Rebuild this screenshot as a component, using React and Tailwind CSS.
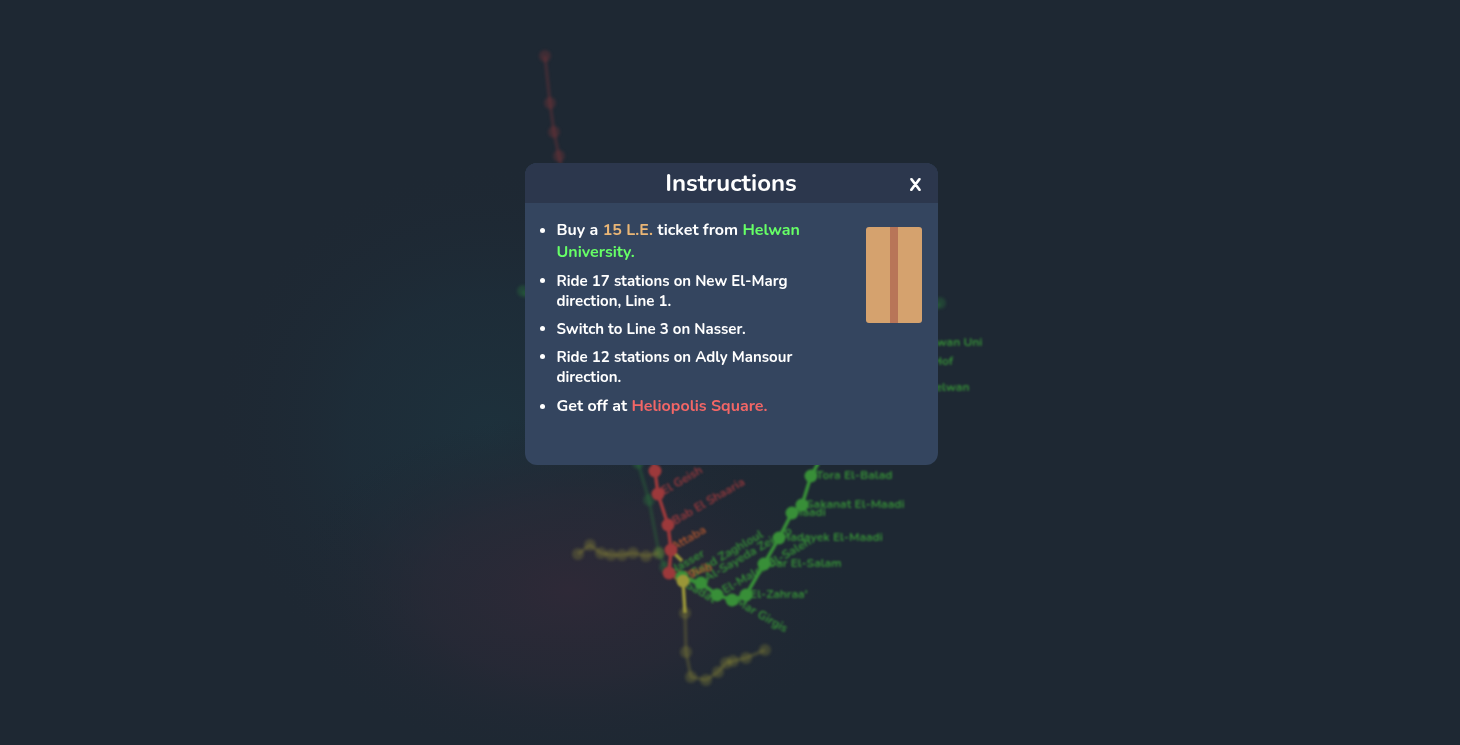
const FONT = "font-[Nunito,Lato,sans-serif]";

const GREEN = "#388f38";
const RED = "#9c393b";
const YELLOW = "#9a9638";

const activeLines = [
  { color: GREEN, points: [[682, 577], [701, 583], [717, 595], [732, 600], [746, 595], [764, 564], [779, 538], [792, 513], [802, 505], [811, 476], [840, 425]], dots: 10 },
  { color: YELLOW, points: [[671, 550], [682, 561]], dots: 0 },
  { color: YELLOW, points: [[683, 581], [685, 613]], dots: 1 },
  { color: RED, points: [[650, 440], [655, 471], [658, 494], [668, 525], [671, 550], [669, 573]], dots: 6 },
];

const fadedLines = [
  { color: RED, points: [[545, 56], [550, 103], [554, 132], [559, 156], [566, 190]] },
  { color: "#2f8a3c", points: [[523, 291], [600, 400], [638, 463], [649, 500], [659, 553], [665, 567]] },
  { color: "#2f8a3c", points: [[920, 330], [940, 303]] },
  { color: YELLOW, points: [[578, 554], [590, 545], [601, 553], [611, 555], [622, 555], [633, 553], [646, 556], [659, 553]] },
  { color: YELLOW, points: [[685, 613], [686, 652], [691, 677], [706, 680], [718, 672], [726, 663], [733, 661], [746, 658], [765, 650]] },
];

const labels = [
  { text: "Helwan Uni", x: 917, y: 346 },
  { text: "Ain Helwan", x: 904, y: 391 },
  { text: "Wadi Hof", x: 900, y: 365 },
  { text: "Tora El-Balad", x: 816, y: 479 },
  { text: "Sakanat El-Maadi", x: 806, y: 508 },
  { text: "Maadi", x: 792, y: 516 },
  { text: "Hadayek El-Maadi", x: 781, y: 541 },
  { text: "Dar El-Salam", x: 767, y: 567 },
  { text: "El-Zahraa'", x: 750, y: 598 },
  { text: "Mar Girgis", x: 735, y: 604, rotate: 30 },
  { text: "El-Malek El-Saleh", x: 725, y: 594, rotate: -30 },
  { text: "Al-Sayeda Zeinab", x: 707, y: 582, rotate: -30 },
  { text: "Saad Zaghloul", x: 694, y: 577, rotate: -30 },
  { text: "Nasser", x: 672, y: 575, rotate: -30 },
  { text: "Sadat", x: 685, y: 587, rotate: 30 },
  { text: "Naguib", x: 674, y: 580, rotate: -14, color: "#b0622f" },
  { text: "Attaba", x: 674, y: 551, rotate: -30, color: "#a8532f" },
  { text: "Bab El Shaaria", x: 675, y: 525, rotate: -30, color: "#92383c" },
  { text: "El Geish", x: 664, y: 495, rotate: -30, color: "#92383c" },
];

const toPath = (points) => points.map((p) => p.join(",")).join(" ");

function MetroMap() {
  return (
    <svg
      className="absolute inset-0 h-full w-full"
      viewBox="0 0 1460 745"
      preserveAspectRatio="xMidYMid slice"
      aria-hidden="true"
    >
      <defs>
        <radialGradient id="teal">
          <stop offset="0" stopColor="#1d333e" stopOpacity="0.8" />
          <stop offset="0.5" stopColor="#1d2f3b" stopOpacity="0.6" />
          <stop offset="1" stopColor="#1e2833" stopOpacity="0" />
        </radialGradient>
        <radialGradient id="plum">
          <stop offset="0" stopColor="#2e2937" stopOpacity="1" />
          <stop offset="0.5" stopColor="#292936" stopOpacity="0.7" />
          <stop offset="1" stopColor="#1e2833" stopOpacity="0" />
        </radialGradient>
        <filter id="soft" x="-5%" y="-5%" width="110%" height="110%" colorInterpolationFilters="sRGB">
          <feGaussianBlur stdDeviation="0.8" />
        </filter>
        <filter id="softer" x="-5%" y="-5%" width="110%" height="110%" colorInterpolationFilters="sRGB">
          <feGaussianBlur stdDeviation="1.4" />
        </filter>
      </defs>
      <ellipse cx="490" cy="430" rx="285" ry="270" fill="url(#teal)" />
      <ellipse cx="570" cy="590" rx="290" ry="175" fill="url(#plum)" />
      <g filter="url(#softer)">
        {fadedLines.map(({ color, points }, i) => (
          <g key={i}>
            <polyline points={toPath(points)} fill="none" stroke={color} strokeWidth="3" opacity="0.3" />
            {points.map(([x, y]) => (
              <circle key={x} cx={x} cy={y} r="6" fill={color} opacity="0.26" />
            ))}
          </g>
        ))}
      </g>
      <g filter="url(#soft)">
        {labels.map(({ text, x, y, rotate = 0, color = "#358b37" }) => (
          <text
            key={text}
            x={x}
            y={y}
            fill={color}
            transform={`rotate(${rotate} ${x} ${y})`}
            className="text-[12px] font-bold"
          >
            {text}
          </text>
        ))}
        {activeLines.map(({ color, points, dots }, i) => (
          <g key={i}>
            <polyline points={toPath(points)} fill="none" stroke={color} strokeWidth="3.5" />
            {points.slice(0, dots).map(([x, y]) => (
              <circle key={x} cx={x} cy={y} r="6.5" fill={color} />
            ))}
          </g>
        ))}
      </g>
    </svg>
  );
}

export default function App() {
  return (
    <main className={`relative flex min-h-screen items-start justify-center overflow-hidden bg-[#1e2833] pt-[163px] pr-4 pl-[18px] text-white ${FONT}`}>
      <MetroMap />
      <section
        role="dialog"
        aria-labelledby="title"
        className="relative w-full max-w-[413px] overflow-hidden rounded-xl bg-[#34455f]"
      >
        <header className="grid h-10 grid-cols-[1fr_auto_1fr] items-center bg-[#2c374d] px-4">
          <h1 id="title" className="col-start-2 text-2xl font-bold">Instructions</h1>
          <button type="button" className="justify-self-end pt-1 text-lg leading-6 font-extrabold">X</button>
        </header>
        <div className="flex items-start justify-between gap-4 px-4 pt-4 pb-12">
          <ul className="flex w-[264px] list-disc flex-col gap-2 pl-4 text-[15px] leading-5 font-bold">
            <li className="text-base leading-[22px]">
              Buy a <span className="text-[#eab676]">15 L.E.</span> ticket from{" "}
              <span className="text-[#66ff66]">Helwan University.</span>
            </li>
            <li>Ride 17 stations on New El-Marg direction, Line 1.</li>
            <li>Switch to Line 3 on Nasser.</li>
            <li>Ride 12 stations on Adly Mansour direction.</li>
            <li className="text-base leading-[22px]">
              Get off at <span className="text-[#f26666]">Heliopolis Square.</span>
            </li>
          </ul>
          <div className="mt-2 flex h-24 w-14 justify-center rounded-[3px] bg-[#d5a26e]">
            <div className="w-2 bg-[#b87558]" />
          </div>
        </div>
      </section>
    </main>
  );
}
